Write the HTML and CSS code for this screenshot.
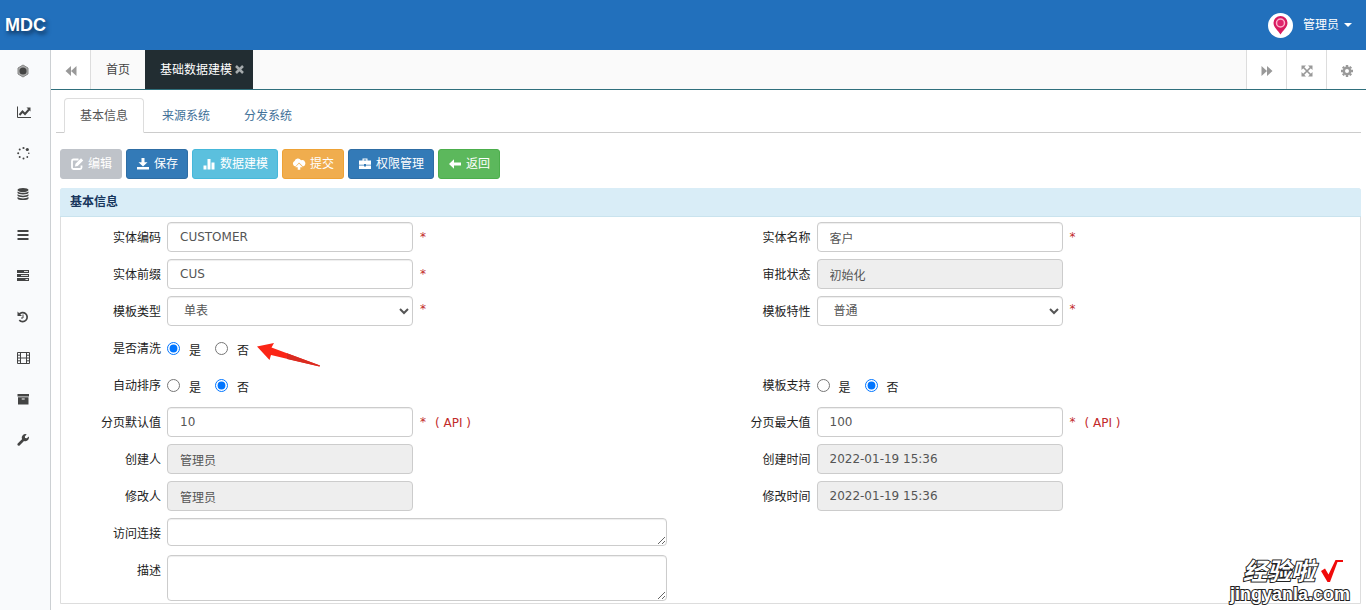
FILE: index.html
```html
<!DOCTYPE html>
<html lang="zh-CN">
<head>
<meta charset="utf-8">
<title>MDC</title>
<link rel="stylesheet" href="styles.css">
</head>
<body>
<header class="topbar">
  <a class="logo" href="#">MDC</a>
  <button class="user" type="button">
    <svg class="avatar" viewBox="0 0 25 25"><circle cx="12.500" cy="12.500" r="12.500" fill="#fff"/><path d="M12.500 21.500C10 17.500 5.500 14.500 5.500 9.800a7 6.800 0 0 1 14 0c0 4.700-4.500 7.700-7 11.700z" fill="#d81b60"/><circle cx="12.500" cy="10" r="4" fill="#e0256c" stroke="#fbb3cb" stroke-width="1.500"/></svg>
    <span>管理员</span>
    <svg class="caret" viewBox="0 0 8 4"><path d="M0 0h8L4 4z"/></svg>
  </button>
</header>
<div class="shell">
  <nav class="sidebar" aria-label="主菜单">
    <a href="#" aria-label="首页"><svg viewBox="0 0 14 14"><path d="M7 1l5 3v6l-5 3-5-3V4z" fill="#aaa" stroke="#888" stroke-width="1"/><circle cx="7" cy="7" r="3.600"/></svg></a>
    <a href="#" aria-label="图表"><svg class="wide" viewBox="0 0 16 14"><path d="M1.500 1.500v11H15" fill="none" stroke="currentColor"/><path d="M3.500 10l3-3.500 2.500 2.500L13 4.500" fill="none" stroke="currentColor" stroke-width="2"/><path d="M10.500 2.500H14.500V6.500z"/></svg></a>
    <a href="#" aria-label="进度"><svg viewBox="0 0 14 14"><circle cx="7.500" cy="2" r="1.100"/><circle cx="11.300" cy="3.500" r="1.600"/><circle cx="12.800" cy="7.300" r=".8"/><circle cx="11.300" cy="11" r=".9"/><circle cx="7.500" cy="12.500" r="1"/><circle cx="3.700" cy="11" r="1"/><circle cx="2.200" cy="7.300" r="1"/><circle cx="3.700" cy="3.500" r="1"/></svg></a>
    <a href="#" aria-label="数据"><svg viewBox="0 0 14 14"><ellipse cx="7" cy="3" rx="5.500" ry="2"/><path d="M1.500 4.500c2 1.800 9 1.800 11 0v1.300c0 2.200-11 2.200-11 0zM1.500 7.300c2 1.800 9 1.800 11 0v1.300c0 2.200-11 2.200-11 0zM1.500 10.100c2 1.800 9 1.800 11 0v1.300c0 2.200-11 2.200-11 0z"/></svg></a>
    <a href="#" aria-label="列表"><svg viewBox="0 0 14 14"><path d="M1.500 2h11v2h-11zM1.500 6h11v2h-11zM1.500 10h11v2h-11z"/></svg></a>
    <a href="#" aria-label="任务"><svg viewBox="0 0 14 14"><path d="M1 1h12v3H1zM1 5h12v3H1zM1 9h12v3H1z"/><path d="M8 2h4v1H8zM5 6h7v1H5zM9.500 10H12v1H9.500z" fill="#ddd"/></svg></a>
    <a href="#" aria-label="历史"><svg viewBox="0 0 14 14"><path d="M3 4.500a4.500 4.500 0 1 1 .3 5.600" fill="none" stroke="currentColor" stroke-width="1.700"/><path d="M1.500 1.500V6H6z"/><path d="M7 4.500V8H5" fill="none" stroke="currentColor"/></svg></a>
    <a href="#" aria-label="影像"><svg viewBox="0 0 14 14"><path d="M1.500 1.500h12v11h-12zM4.500 1.500v11M10.500 1.500v11M4.500 7h6M1.500 4.200h3M1.500 7h3M1.500 9.800h3M10.500 4.200h3M10.500 7h3M10.500 9.800h3" fill="none" stroke="currentColor"/></svg></a>
    <a href="#" aria-label="归档"><svg viewBox="0 0 14 14"><path d="M1.500 2h11.500v2.500H1.500zM2 5.300h10.500V12.500H2z"/><path d="M5.700 6.500h3v1h-3z" fill="#fff"/></svg></a>
    <a href="#" aria-label="工具"><svg viewBox="0 0 14 14"><path d="M13 4.600a3.700 3.700 0 0 1-5 3.400l-4.400 4.400c-1.200 1.200-3-.6-1.900-1.800L6 6.200A3.700 3.700 0 0 1 10.700 1.300L8.800 3.400l.3 1.700 1.700.2 2-1.700z"/></svg></a>
  </nav>
  <main class="main">
    <div class="pages">
      <button class="tool first" type="button" aria-label="向左"><svg viewBox="0 0 14 14"><path d="M7 2v10L1.500 7zM12.500 2v10L7 7z"/></svg></button>
      <a class="page" href="#">首页</a>
      <a class="page current" href="#">基础数据建模<svg viewBox="0 0 9 9"><path d="M1 1l7 7M8 1L1 8" fill="none" stroke="currentColor" stroke-width="2.500"/></svg></a>
      <div class="tools">
        <button class="tool" type="button" aria-label="向右"><svg viewBox="0 0 14 14"><path d="M1.500 2v10L7 7zM7 2v10l5.500-5z"/></svg></button>
        <button class="tool" type="button" aria-label="全屏"><svg viewBox="0 0 14 14"><path d="M1.500 1.500H6L1.500 6zM12.500 1.500V6L8 1.500zM1.500 12.500V8L6 12.500zM12.500 12.500H8L12.500 8z"/><path d="M3 3l8 8M11 3l-8 8" stroke="currentColor" stroke-width="1.700"/></svg></button>
        <button class="tool" type="button" aria-label="设置"><svg viewBox="0 0 14 14"><circle cx="7" cy="7" r="3.200" fill="none" stroke="currentColor" stroke-width="2.400"/><path d="M7 1v2M7 11v2M1 7h2M11 7h2M2.800 2.800l1.400 1.400M9.800 9.800l1.400 1.400M11.200 2.800L9.800 4.200M4.200 9.800l-1.400 1.400" stroke="currentColor" stroke-width="2.400"/></svg></button>
      </div>
    </div>
    <div class="content">
      <div class="tabs">
        <a class="tab active" href="#">基本信息</a>
        <a class="tab" href="#">来源系统</a>
        <a class="tab" href="#">分发系统</a>
      </div>
      <div class="toolbar">
        <button class="btn muted" type="button"><svg viewBox="0 0 14 14"><path d="M8.500 2.500H3.500a1.500 1.500 0 0 0-1.500 1.500v6.500A1.500 1.500 0 0 0 3.500 12H10a1.500 1.500 0 0 0 1.500-1.500V8.500" fill="none" stroke="currentColor" stroke-width="1.800"/><path d="M5 9.500l.5-2.800L11 1.200l2.200 2.200-5.500 5.500z"/></svg>编辑</button>
        <button class="btn primary" type="button"><svg viewBox="0 0 14 14"><path d="M5.500 1h3v4.200h3L7 9.500 2.500 5.200h3zM1 10h12v2.500H1z"/></svg>保存</button>
        <button class="btn info" type="button"><svg viewBox="0 0 14 14"><path d="M1.500 8.500h3v4h-3zM5.500 2h3v10.500h-3zM9.500 5.500h3v7h-3z"/></svg>数据建模</button>
        <button class="btn warning" type="button"><svg viewBox="0 0 14 14"><path d="M3.500 9.500A2.900 2.900 0 0 1 2.600 4 3.500 3.500 0 0 1 9 3.200a3.200 3.200 0 0 1 2 6.300L7 5.400z"/><path d="M7 6.500l3.700 3.700H8.300v2.600H5.700v-2.600H3.300z"/></svg>提交</button>
        <button class="btn primary" type="button"><svg viewBox="0 0 14 14"><path d="M4.500 3.500V1.500h5v2h3.500v4.200H8V6.900H6v.8H1V3.500zm1.200 0h2.600v-.9H5.700zM1 8.600h5v.8h2v-.8h5V12H1z"/></svg>权限管理</button>
        <button class="btn success" type="button"><svg viewBox="0 0 14 14"><path d="M1 7l5-4.800v3.300h7v3H6v3.300z"/></svg>返回</button>
      </div>
      <section class="panel">
        <h2>基本信息</h2>
        <form class="form">
          <div class="row"><label for="code">实体编码</label><input class="ctl" id="code" type="text" value="CUSTOMER"><span class="req">*</span></div>
          <div class="row"><label for="name">实体名称</label><input class="ctl" id="name" type="text" value="客户"><span class="req">*</span></div>
          <div class="row"><label for="prefix">实体前缀</label><input class="ctl" id="prefix" type="text" value="CUS"><span class="req">*</span></div>
          <div class="row"><label for="status">审批状态</label><input class="ctl" id="status" type="text" value="初始化" readonly></div>
          <div class="row"><label for="type">模板类型</label><select class="ctl" id="type"><option>单表</option></select><span class="req high">*</span></div>
          <div class="row"><label for="trait">模板特性</label><select class="ctl" id="trait"><option>普通</option></select><span class="req high">*</span></div>
          <div class="row full" role="radiogroup" aria-labelledby="clean"><span class="label" id="clean">是否清洗</span>
            <div class="radios"><label><input type="radio" name="clean" checked><span>是</span></label><label><input type="radio" name="clean"><span>否</span></label>
            <svg class="pointer" viewBox="0 0 64 26"><path d="M0 4.500L17 1l-2.500 4.500L63 23.500l-.5 1L14 13l-1.500 5z" fill="#fb2516"/><path d="M30 11.300L63 23.500l-.5 1L30 17z" fill="#d92b20"/></svg></div></div>
          <div class="row" role="radiogroup" aria-labelledby="sort"><span class="label" id="sort">自动排序</span>
            <div class="radios"><label><input type="radio" name="sort"><span>是</span></label><label><input type="radio" name="sort" checked><span>否</span></label></div></div>
          <div class="row" role="radiogroup" aria-labelledby="support"><span class="label" id="support">模板支持</span>
            <div class="radios"><label><input type="radio" name="support"><span>是</span></label><label><input type="radio" name="support" checked><span>否</span></label></div></div>
          <div class="row"><label for="size">分页默认值</label><input class="ctl" id="size" type="text" value="10"><span class="req">*</span><span class="api">( API )</span></div>
          <div class="row"><label for="max">分页最大值</label><input class="ctl" id="max" type="text" value="100"><span class="req">*</span><span class="api">( API )</span></div>
          <div class="row"><label for="creator">创建人</label><input class="ctl" id="creator" type="text" value="管理员" readonly></div>
          <div class="row"><label for="created">创建时间</label><input class="ctl" id="created" type="text" value="2022-01-19 15:36" readonly></div>
          <div class="row"><label for="editor">修改人</label><input class="ctl" id="editor" type="text" value="管理员" readonly></div>
          <div class="row"><label for="edited">修改时间</label><input class="ctl" id="edited" type="text" value="2022-01-19 15:36" readonly></div>
          <div class="row full"><label for="link">访问连接</label><textarea class="ctl area" id="link"></textarea></div>
          <div class="row full"><label for="desc">描述</label><textarea class="ctl area tall" id="desc"></textarea></div>
        </form>
      </section>
    </div>
  </main>
</div>
<div class="watermark">
  <div class="mark-top"><span>经验啦</span><svg viewBox="0 0 24 24"><path d="M1 11l4-2.500 3.500 6L15.500 0H23v2h-5.500L10 22H7.500z" fill="#f00a0a"/></svg></div>
  <div class="mark-site">jingyanla.com</div>
</div>
</body>
</html>
```
FILE: styles.css
```css
* { box-sizing: border-box; }
body {
  margin: 0;
  min-height: 100vh;
  display: flex;
  flex-direction: column;
  position: relative;
  background: #fff;
  color: #222;
  font: 12px/18px "DejaVu Sans", "Noto Sans CJK SC", sans-serif;
}
a { color: inherit; text-decoration: none; }
button, input, select, textarea { font: inherit; }
button { cursor: pointer; }
svg { display: block; flex: none; fill: currentColor; }

.topbar {
  height: 50px;
  padding: 0 14px 0 5px;
  display: flex;
  align-items: center;
  justify-content: space-between;
  background: #2270bc;
  color: #fff;
}
.logo {
  font: bold 18px/24px "Liberation Sans", Arial, sans-serif;
  text-shadow: 2px 3px 4px #0c2c50;
}
.user {
  display: flex;
  align-items: center;
  padding: 0;
  border: 0;
  background: none;
  color: #fff;
}
.avatar { width: 25px; height: 25px; margin-right: 10px; }
.caret { width: 8px; height: 4px; margin-left: 5px; }

.shell { flex: 1; display: flex; }
.sidebar {
  width: 51px;
  flex: none;
  background: #f9fafc;
  border-right: 1px solid #ccd0d3;
  color: #444;
}
.sidebar a {
  height: 41px;
  display: flex;
  align-items: center;
  padding-left: 16px;
}
.sidebar svg { width: 14px; height: 14px; }
.sidebar .wide { width: 16px; }
.main { flex: 1; min-width: 0; }

.pages {
  height: 40px;
  display: flex;
  background: #fafafa;
  border-bottom: 1px solid #2f6f7c;
}
.tool {
  width: 40px;
  display: flex;
  align-items: center;
  justify-content: center;
  padding: 2px 0 0;
  border: 0;
  border-left: 1px solid #ddd;
  background: #fff;
  color: #999;
}
.tool.first { border-left: 0; border-right: 1px solid #ddd; }
.tool svg { width: 14px; height: 14px; }
.tools { display: flex; margin-left: auto; }
.page {
  display: flex;
  align-items: center;
  gap: 3px;
  padding: 0 15px;
  color: #444;
}
.page.current { padding-right: 9px; background: #222d32; color: #fff; }
.page svg { width: 9px; height: 9px; color: #a5abad; }

.content { padding: 8px 5px 6px; }
.tabs {
  display: flex;
  gap: 2px;
  padding-left: 8px;
  border-bottom: 1px solid #ccc;
}
.tab {
  height: 35px;
  margin-bottom: -1px;
  padding: 8px 15px;
  border: 1px solid transparent;
  border-radius: 4px 4px 0 0;
  color: #417199;
}
.tab.active {
  border-color: #ddd;
  border-bottom-color: #fff;
  background: #fff;
  color: #555;
}
.toolbar { display: flex; gap: 4px; padding: 16px 4px 9px; }
.btn {
  height: 30px;
  display: flex;
  align-items: center;
  gap: 4px;
  padding: 0 9px;
  border: 1px solid;
  border-radius: 3px;
  color: #fff;
}
.btn svg { width: 14px; height: 14px; }
.muted { background: #bfc3c9; border-color: #bfc3c9; }
.primary { background: #337ab7; border-color: #2e6da4; }
.info { background: #5bc0de; border-color: #46b8da; }
.warning { background: #f0ad4e; border-color: #eea236; }
.success { background: #5cb85c; border-color: #4cae4c; }

.panel {
  margin-left: 4px;
  border: 1px solid #ddd;
  border-radius: 3px 3px 0 0;
}
.panel h2 {
  margin: -1px -1px 0;
  padding: 5px 10px;
  border-bottom: 1px solid #c9e3ee;
  border-radius: 3px 3px 0 0;
  background: #d9edf7;
  color: #17365d;
  font-size: 12px;
  line-height: 18px;
}
.form {
  display: grid;
  grid-template-columns: 1fr 1fr;
  row-gap: 7px;
  padding: 5px 0 2px;
}
.row { display: flex; height: 30px; }
.row:last-child { height: auto; }
.row.full { grid-column: 1 / -1; }
.row > label, .label {
  width: 100px;
  flex: none;
  margin-right: 6px;
  line-height: 32px;
  text-align: right;
}
.ctl {
  width: 246px;
  height: 30px;
  padding: 0 12px;
  border: 1px solid #ccc;
  border-radius: 4px;
  background: #fff;
  color: #555;
  box-shadow: inset 0 1px 1px #eee;
}
.ctl:read-only:not(select) { background: #eee; }
.area { width: 500px; height: 28px; }
.area.tall { height: 46px; }
.req, .api { color: #c22a2a; line-height: 30px; }
.req { margin-left: 7px; }
.high { line-height: 26px; }
.api { margin-left: 9px; line-height: 32px; }
.radios { position: relative; display: flex; gap: 14px; }
.radios label { display: flex; align-items: center; gap: 9px; }
.radios input { width: 13px; height: 13px; margin: 0; }
.radios span { padding-top: 6px; }
.pointer {
  position: absolute;
  left: 90px;
  top: 9px;
  width: 64px;
  height: 26px;
}

.watermark {
  position: absolute;
  right: 16px;
  bottom: 6px;
  color: #fff;
  font-family: "Liberation Sans", "Noto Sans CJK SC", sans-serif;
  font-weight: bold;
  -webkit-text-stroke: 2px #222;
  paint-order: stroke fill;
}
.mark-top {
  display: flex;
  justify-content: flex-end;
  gap: 5px;
  padding-right: 6px;
  font-size: 24px;
  font-style: italic;
  line-height: 24px;
}
.mark-top svg { width: 24px; height: 24px; }
.mark-site { font-size: 18px; line-height: 20px; }
```
